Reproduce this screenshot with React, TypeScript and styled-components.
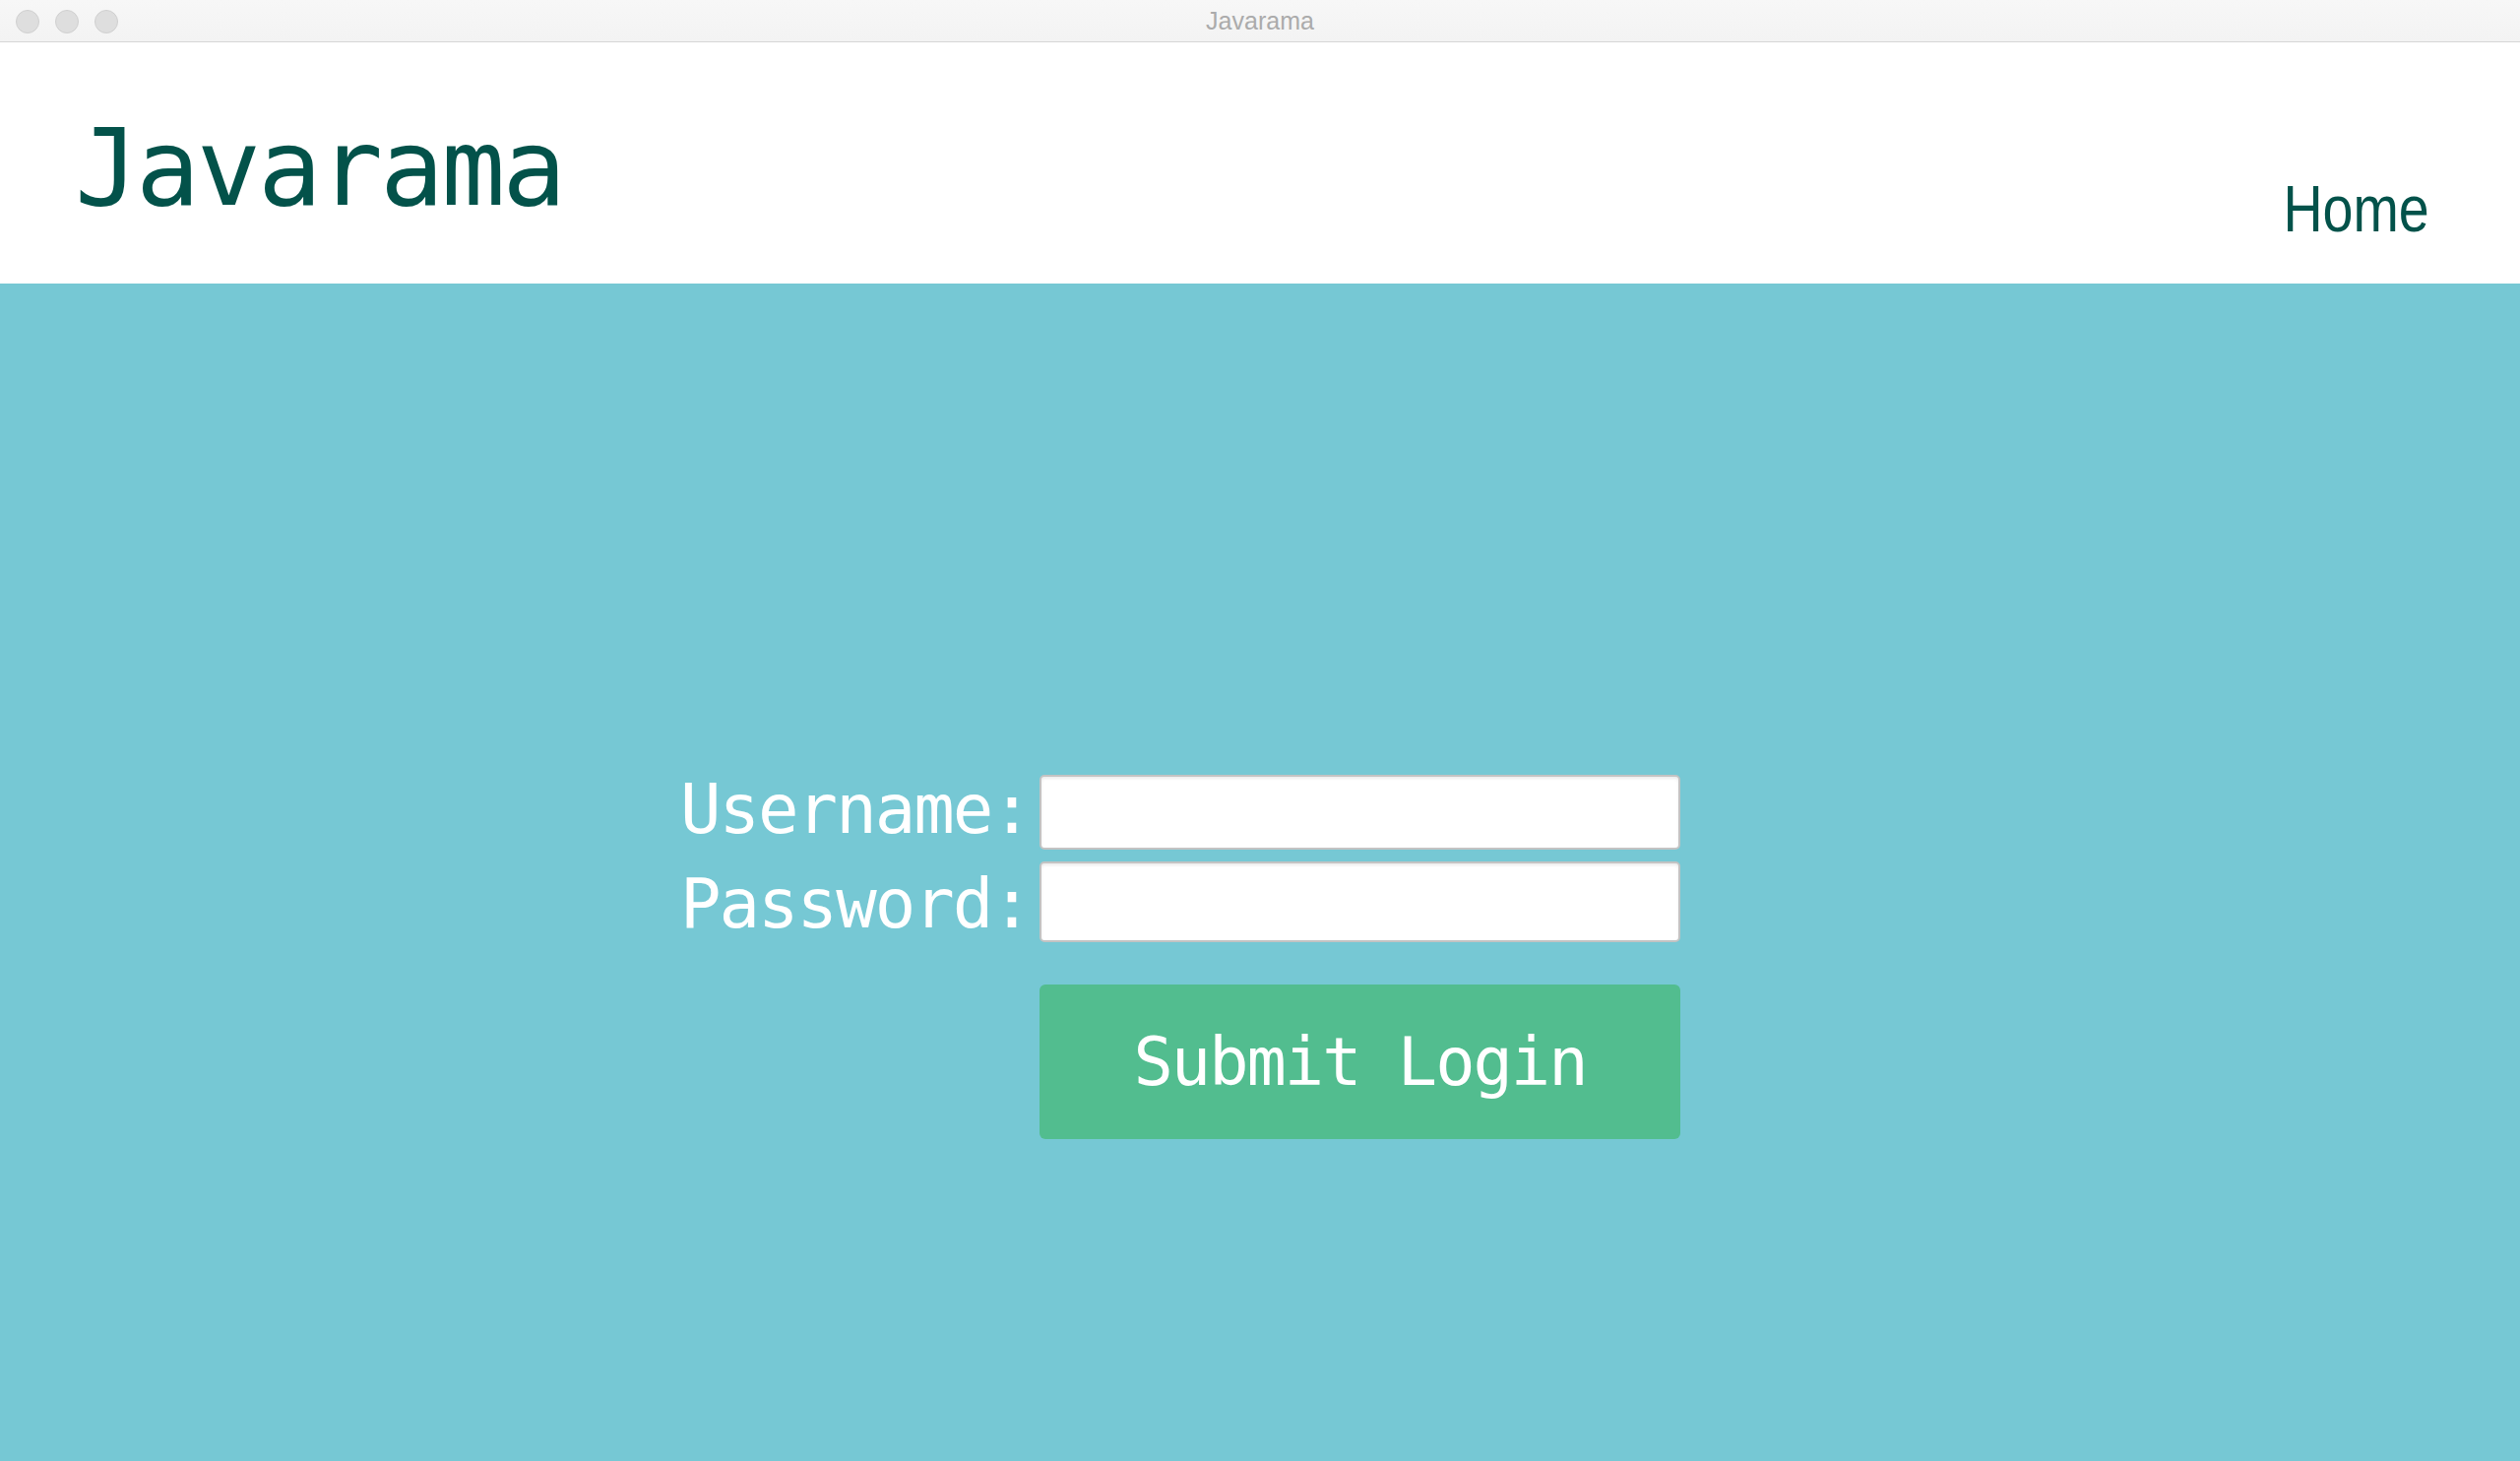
import React from 'react';
import styled, { createGlobalStyle } from 'styled-components';

const GlobalStyle = createGlobalStyle`
  html, body {
    margin: 0;
    padding: 0;
    background-color: #76c8d4;
  }
  * {
    box-sizing: border-box;
  }
`;

const Window = styled.div`
  display: flex;
  flex-direction: column;
  min-height: 100vh;
  background-color: #76c8d4;
`;

const TitleBar = styled.div`
  position: relative;
  display: flex;
  align-items: center;
  justify-content: center;
  height: 43px;
  background: linear-gradient(#f7f7f7, #f3f3f3);
  border-bottom: 1px solid #d6d6d6;
`;

const Lights = styled.div`
  position: absolute;
  left: 16px;
  top: 10px;
  display: flex;
  gap: 16px;
`;

const Light = styled.span`
  width: 24px;
  height: 24px;
  border-radius: 50%;
  background-color: #dedede;
  border: 1px solid #d0d0d0;
`;

const WindowTitle = styled.span`
  font-family: 'Liberation Sans', Arial, sans-serif;
  font-size: 25px;
  color: #ababab;
`;

const Header = styled.header`
  display: flex;
  justify-content: space-between;
  align-items: flex-start;
  height: 245px;
  padding: 0 92px 0 76px;
  background-color: #ffffff;
`;

const Logo = styled.h1`
  margin: 74px 0 0;
  font-family: 'DejaVu Sans Mono', 'Liberation Mono', monospace;
  font-weight: normal;
  font-size: 108px;
  line-height: 1;
  letter-spacing: -3px;
  color: #03524a;
`;

const NavLink = styled.a`
  display: inline-block;
  margin-top: 135px;
  font-family: 'Liberation Sans', Arial, sans-serif;
  font-size: 67px;
  line-height: 1;
  color: #03524a;
  text-decoration: none;
  transform: scaleX(0.83);
  transform-origin: right center;
`;

const Main = styled.main`
  flex: 1;
  display: flex;
  justify-content: center;
  padding: 499px 162px 0 0;
`;

const Form = styled.form`
  display: grid;
  grid-template-columns: 350px 651px;
  column-gap: 15px;
  row-gap: 12px;
  align-items: center;
  align-content: start;
`;

const Label = styled.label<{ $shift?: number }>`
  margin-top: ${(p) => p.$shift ?? 0}px;
  font-family: 'DejaVu Sans Mono', 'Liberation Mono', monospace;
  font-size: 69px;
  line-height: 1;
  letter-spacing: -2px;
  color: #ffffff;
  white-space: nowrap;
  text-align: right;
`;

const Input = styled.input<{ $h: number }>`
  height: ${(p) => p.$h}px;
  width: 100%;
  padding: 0 16px;
  border: 2px solid #c3c3c3;
  border-radius: 5px;
  background-color: #ffffff;
  box-shadow: inset 0 2px 3px rgba(0, 0, 0, 0.08);
  font-size: 40px;
  outline: none;
`;

const SubmitButton = styled.button`
  grid-column: 2;
  margin-top: 31px;
  height: 157px;
  width: 100%;
  border: none;
  border-radius: 6px;
  background-color: #52bd8f;
  color: #ffffff;
  font-family: 'DejaVu Sans Mono', 'Liberation Mono', monospace;
  font-size: 67px;
  letter-spacing: -2px;
  cursor: pointer;
`;

const App: React.FC = () => {
  return (
    <>
      <GlobalStyle />
      <Window>
        <TitleBar>
          <Lights>
            <Light />
            <Light />
            <Light />
          </Lights>
          <WindowTitle>Javarama</WindowTitle>
        </TitleBar>
        <Header>
          <Logo>Javarama</Logo>
          <NavLink href="#">Home</NavLink>
        </Header>
        <Main>
          <Form onSubmit={(e) => e.preventDefault()}>
            <Label htmlFor="username" $shift={-6}>Username:</Label>
            <Input id="username" type="text" $h={76} />
            <Label htmlFor="password" $shift={4}>Password:</Label>
            <Input id="password" type="password" $h={82} />
            <SubmitButton type="submit">Submit Login</SubmitButton>
          </Form>
        </Main>
      </Window>
    </>
  );
};

export default App;
